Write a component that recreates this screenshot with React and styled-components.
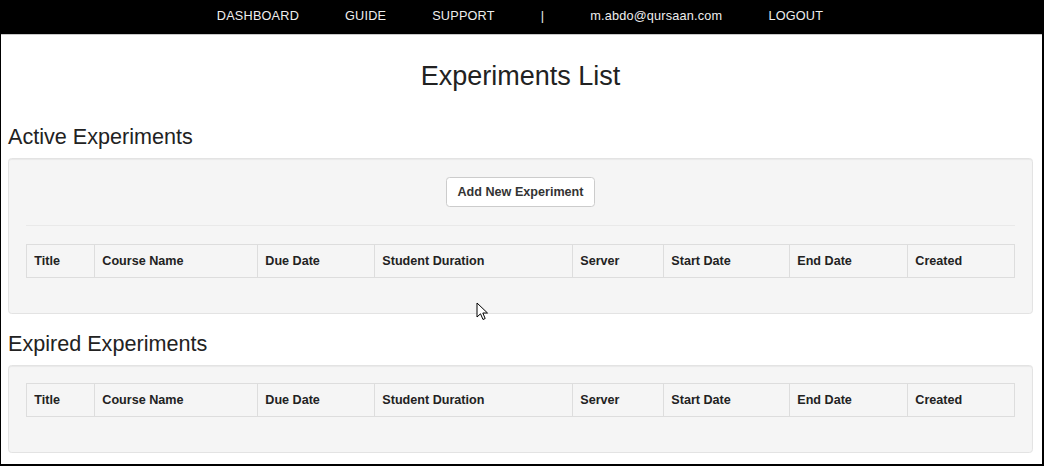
import React from "react";
import styled, { createGlobalStyle } from "styled-components";

const Global = createGlobalStyle`
  html, body { margin: 0; padding: 0; background: #fff; }
  body { font-family: "Liberation Sans", Arial, sans-serif; font-size: 12.6px; color: #333; }
  * { box-sizing: border-box; }
`;

const Frame = styled.div`
  position: relative;
  width: 1044px;
  height: 466px;
  overflow: hidden;
  border-left: 1px solid #000;
  border-right: 2px solid #000;
  border-bottom: 2px solid #000;
  background: #fff;
`;

const NavBar = styled.nav`
  height: 35px;
  background: #000;
  border-bottom: 1px solid #c8c8c8;
  display: flex;
  align-items: center;
  justify-content: center;
  padding-right: 3px;
`;

const NavItem = styled.a`
  color: #eee;
  font-size: 12.7px;
  letter-spacing: 0.2px;
  line-height: 18px;
  padding: 0 23px;
  text-decoration: none;
  white-space: nowrap;
  margin-top: -2px;
`;

const Content = styled.main`
  padding: 0 9px 0 7px;
`;

const PageTitle = styled.h2`
  margin: 27px 0 0;
  font-size: 27px;
  font-weight: 400;
  line-height: 1.1;
  text-align: center;
  color: #222;
`;

const SectionTitle = styled.h3`
  margin: ${(p) => p.$top}px 0 ${(p) => p.$bottom}px;
  font-size: 21.6px;
  font-weight: 400;
  line-height: 1.1;
  color: #222;
`;

const Well = styled.section`
  background: #f5f5f5;
  border: 1px solid #e3e3e3;
  border-radius: 3.6px;
  box-shadow: inset 0 1px 1px rgba(0, 0, 0, 0.05);
  padding: 17.1px;
  margin-bottom: ${(p) => p.$bottom}px;
`;

const ButtonRow = styled.div`
  display: flex;
  justify-content: center;
`;

const Button = styled.button`
  font-family: inherit;
  font-size: 12.6px;
  font-weight: 700;
  line-height: 18px;
  color: #333;
  background: #fff;
  border: 1px solid #ccc;
  border-radius: 3.6px;
  padding: 5.4px 10.8px;
  cursor: pointer;
`;

const Divider = styled.hr`
  margin: 18px 0;
  border: 0;
  border-top: 1px solid #e9e9e9;
`;

const Table = styled.table`
  width: 100%;
  table-layout: fixed;
  border-collapse: collapse;
  border: 1px solid #ddd;
  margin-bottom: 18px;
`;

const Th = styled.th`
  width: ${(p) => p.$w}px;
  padding: 7px 7.2px;
  text-align: left;
  vertical-align: bottom;
  font-size: 12.6px;
  font-weight: 700;
  line-height: 18px;
  color: #222;
  border: 1px solid #ddd;
  white-space: nowrap;
`;

const Cursor = styled.svg`
  position: absolute;
  left: 475px;
  top: 302px;
  pointer-events: none;
`;

const columns = [
  ["Title", 68],
  ["Course Name", 163],
  ["Due Date", 117],
  ["Student Duration", 198],
  ["Server", 91],
  ["Start Date", 126],
  ["End Date", 118],
  ["Created", 107],
];

function ExperimentsTable() {
  return (
    <Table>
      <thead>
        <tr>
          {columns.map(([label, w]) => (
            <Th key={label} $w={w}>
              {label}
            </Th>
          ))}
        </tr>
      </thead>
      <tbody />
    </Table>
  );
}

export default function App() {
  return (
    <>
      <Global />
      <Frame>
        <NavBar>
          <NavItem href="#">DASHBOARD</NavItem>
          <NavItem href="#">GUIDE</NavItem>
          <NavItem href="#">SUPPORT</NavItem>
          <NavItem as="span">|</NavItem>
          <NavItem href="#">m.abdo@qursaan.com</NavItem>
          <NavItem href="#">LOGOUT</NavItem>
        </NavBar>
        <Content>
          <PageTitle>Experiments List</PageTitle>
          <SectionTitle $top={33} $bottom={10}>
            Active Experiments
          </SectionTitle>
          <Well $bottom={18}>
            <ButtonRow>
              <Button type="button">Add New Experiment</Button>
            </ButtonRow>
            <Divider />
            <ExperimentsTable />
          </Well>
          <SectionTitle $top={0} $bottom={9}>
            Expired Experiments
          </SectionTitle>
          <Well $bottom={18}>
            <ExperimentsTable />
          </Well>
        </Content>
        <Cursor width="13" height="20" viewBox="0 0 13 20">
          <path
            d="M1 1 L1 15 L4.5 11.8 L7 17.5 L9.2 16.5 L6.8 11 L11.5 11 Z"
            fill="#fff"
            stroke="#000"
            strokeWidth="1"
            strokeLinejoin="round"
          />
        </Cursor>
      </Frame>
    </>
  );
}
